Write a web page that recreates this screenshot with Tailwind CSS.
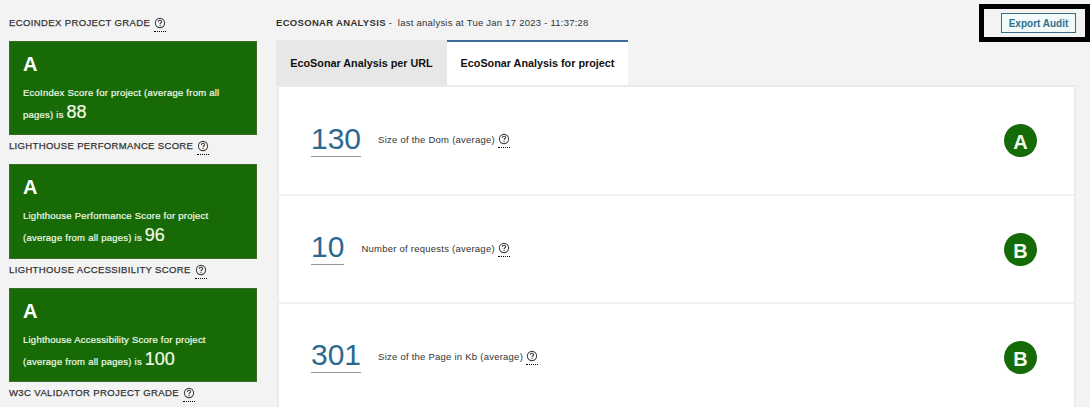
<!DOCTYPE html>
<html lang="en">
<head>
<meta charset="utf-8">
<title>EcoSonar</title>
<script src="https://cdn.jsdelivr.net/npm/@tailwindcss/browser@4"></script>
</head>
<body class="h-[407px] w-[1090px] overflow-hidden bg-[#f3f3f3] font-['Liberation_Sans',Arial,sans-serif] text-[9.5px] tracking-[0.24px] text-[#333]">
<svg class="hidden">
  <symbol id="help" viewBox="0 0 12 12">
    <circle cx="6" cy="6" r="4.6" fill="none" stroke="#444" stroke-width="1.1"/>
    <path d="M4.4 4.9C4.4 3.8 5.1 3.3 6 3.3s1.6.6 1.6 1.4C7.6 5.7 6.1 5.8 6.1 7" fill="none" stroke="#444" stroke-width="1.1"/>
    <rect x="5.5" y="7.8" width="1.2" height="1.1" fill="#444"/>
  </symbol>
</svg>
<div class="flex h-full">
  <aside class="w-[276px] shrink-0 pl-[9px] pt-[17px] whitespace-nowrap">
    <div class="flex h-[24px] items-start gap-[4px] leading-[12px] tracking-[0.38px] [-webkit-text-stroke:0.25px_#333]">ECOINDEX PROJECT GRADE <span class="h-[15px] w-[12px] border-b border-dotted border-black"><svg class="size-3"><use href="#help"/></svg></span></div>
    <div class="h-[94px] w-[248px] bg-[#186a06] pl-[13px] pt-[11px] text-[#f0fbe9] border border-[#3d6b28]">
      <div class="h-[30px] text-[20px] leading-[23px] font-bold tracking-normal text-white">A</div>
      <div class="leading-[20px] [-webkit-text-stroke:0.2px_#f0fbe9]"><div class="h-[20px]">EcoIndex Score for project (average from all</div><div class="h-[20px]">pages) is <span class="text-[18px] leading-[18px] tracking-normal">88</span></div></div>
    </div>
    <div class="flex h-[29px] items-start gap-[4px] pt-[5px] leading-[12px] tracking-[0.34px] [-webkit-text-stroke:0.25px_#333]">LIGHTHOUSE PERFORMANCE SCORE <span class="h-[15px] w-[12px] border-b border-dotted border-black"><svg class="size-3"><use href="#help"/></svg></span></div>
    <div class="h-[95px] w-[248px] bg-[#186a06] pl-[13px] pt-[11px] text-[#f0fbe9] border border-[#3d6b28]">
      <div class="h-[30px] text-[20px] leading-[23px] font-bold tracking-normal text-white">A</div>
      <div class="leading-[20px] [-webkit-text-stroke:0.2px_#f0fbe9]"><div class="h-[20px]">Lighthouse Performance Score for project</div><div class="h-[20px]">(average from all pages) is <span class="text-[18px] leading-[18px] tracking-normal">96</span></div></div>
    </div>
    <div class="flex h-[29px] items-start gap-[4px] pt-[5px] leading-[12px] tracking-[0.36px] [-webkit-text-stroke:0.25px_#333]">LIGHTHOUSE ACCESSIBILITY SCORE <span class="h-[15px] w-[12px] border-b border-dotted border-black"><svg class="size-3"><use href="#help"/></svg></span></div>
    <div class="h-[94px] w-[248px] bg-[#186a06] pl-[13px] pt-[11px] text-[#f0fbe9] border border-[#3d6b28]">
      <div class="h-[30px] text-[20px] leading-[23px] font-bold tracking-normal text-white">A</div>
      <div class="leading-[20px] [-webkit-text-stroke:0.2px_#f0fbe9]"><div class="h-[20px]">Lighthouse Accessibility Score for project</div><div class="h-[20px]">(average from all pages) is <span class="text-[18px] leading-[18px] tracking-normal">100</span></div></div>
    </div>
    <div class="flex h-[29px] items-start gap-[4px] pt-[5px] leading-[12px] tracking-[0.4px] [-webkit-text-stroke:0.25px_#333]">W3C VALIDATOR PROJECT GRADE <span class="h-[15px] w-[12px] border-b border-dotted border-black"><svg class="size-3"><use href="#help"/></svg></span></div>
  </aside>
  <main class="flex-1 whitespace-nowrap">
    <div class="flex h-[40px] justify-between">
      <div class="pt-[17px] leading-[12px]"><b class="tracking-[0.32px]">ECOSONAR ANALYSIS</b> -&nbsp; <span>last analysis at Tue Jan 17 2023 - 11:37:28</span></div>
      <div class="mt-[4px] h-[38px] w-[111px] shrink-0 border-[5px] border-black pl-[17px] pt-[4px]">
        <button class="flex h-[20px] w-[75px] items-center justify-center border border-[#3a6c85] bg-[#f3fafa] text-[10px] font-bold tracking-normal text-[#2f6f8a]">Export Audit</button>
      </div>
    </div>
    <div class="flex h-[45px] text-[10.8px] font-bold tracking-normal text-[#111]">
      <div class="flex w-[171px] items-center justify-center bg-[#e7e7e7] pt-[2px]">EcoSonar Analysis per URL</div>
      <div class="flex w-[181px] items-center justify-center border-t-2 border-[#3f6a9a] bg-white">EcoSonar Analysis for project</div>
    </div>
    <div class="ml-px h-[322px] w-[799px] border-2 border-b-0 border-[#ebebed] bg-white">
      <div class="flex h-[109px] items-center border-b-2 border-[#f1f1f3] pl-[32px] pr-[37px]">
        <span class="mr-[17px] h-[34px] border-b border-[#999] text-[30px] leading-[32px] tracking-normal text-[#2d688f] -mt-[2px]">130</span>
        <span class="mr-[3px]">Size of the Dom (average)</span><span class="h-[15px] w-[12px] border-b border-dotted border-black"><svg class="size-3"><use href="#help"/></svg></span>
        <span class="ml-auto flex size-[33px] items-center justify-center rounded-full bg-[#146b08] pt-[3px] text-[20px] font-bold tracking-normal text-[#f2fbee]">A</span>
      </div>
      <div class="flex h-[108px] items-center border-b-2 border-[#f1f1f3] pl-[32px] pr-[37px]">
        <span class="mr-[17px] h-[34px] border-b border-[#999] text-[30px] leading-[32px] tracking-normal text-[#2d688f] -mt-[2px]">10</span>
        <span class="mr-[3px]">Number of requests (average)</span><span class="h-[15px] w-[12px] border-b border-dotted border-black"><svg class="size-3"><use href="#help"/></svg></span>
        <span class="ml-auto flex size-[33px] items-center justify-center rounded-full bg-[#146b08] pt-[3px] text-[20px] font-bold tracking-normal text-[#f2fbee]">B</span>
      </div>
      <div class="flex h-[106px] items-center pl-[32px] pr-[37px]">
        <span class="mr-[17px] h-[34px] border-b border-[#999] text-[30px] leading-[32px] tracking-normal text-[#2d688f] -mt-[2px]">301</span>
        <span class="mr-[3px]">Size of the Page in Kb (average)</span><span class="h-[15px] w-[12px] border-b border-dotted border-black"><svg class="size-3"><use href="#help"/></svg></span>
        <span class="ml-auto flex size-[33px] items-center justify-center rounded-full bg-[#146b08] pt-[3px] text-[20px] font-bold tracking-normal text-[#f2fbee]">B</span>
      </div>
    </div>
  </main>
</div>
</body>
</html>
